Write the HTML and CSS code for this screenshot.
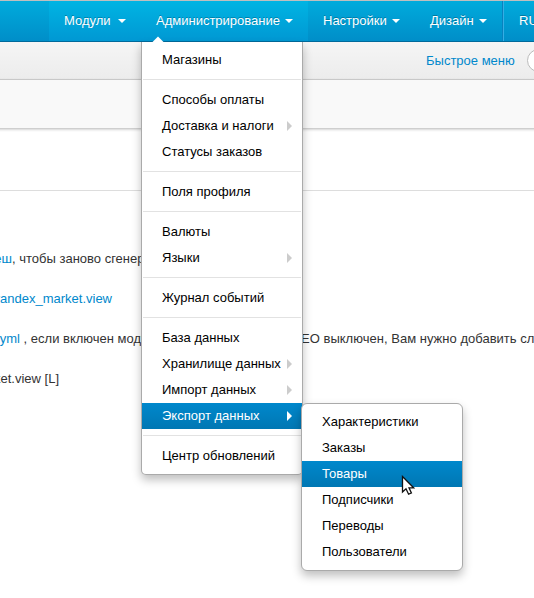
FILE: index.html
```html
<!DOCTYPE html>
<html lang="ru">
<head>
<meta charset="utf-8">
<title>Администрирование</title>
<link rel="stylesheet" href="styles.css">
</head>
<body>
<nav class="navbar">
  <a class="tab lit modules">Модули<i class="caret"></i></a>
  <div class="tab lit open">Администрирование<i class="caret"></i>
    <svg class="pointer" width="14" height="7" viewBox="0 0 14 7"><path d="M0.5 7 7 0.5 13.5 7z" fill="#fff"/></svg>
    <ul class="menu main-menu">
      <li class="item">Магазины</li>
      <li class="divider"></li>
      <li class="item">Способы оплаты</li>
      <li class="item sub">Доставка и налоги</li>
      <li class="item">Статусы заказов</li>
      <li class="divider"></li>
      <li class="item">Поля профиля</li>
      <li class="divider"></li>
      <li class="item">Валюты</li>
      <li class="item sub">Языки</li>
      <li class="divider"></li>
      <li class="item">Журнал событий</li>
      <li class="divider"></li>
      <li class="item">База данных</li>
      <li class="item sub">Хранилище данных</li>
      <li class="item sub">Импорт данных</li>
      <li class="item sub active">Экспорт данных
        <ul class="menu submenu">
          <li class="item">Характеристики</li>
          <li class="item">Заказы</li>
          <li class="item active">Товары</li>
          <li class="item">Подписчики</li>
          <li class="item">Переводы</li>
          <li class="item">Пользователи</li>
        </ul>
      </li>
      <li class="divider"></li>
      <li class="item">Центр обновлений</li>
    </ul>
  </div>
  <a class="tab settings">Настройки<i class="caret"></i></a>
  <a class="tab design">Дизайн<i class="caret"></i></a>
  <a class="tab lang">RU</a>
</nav>
<div class="quickbar"><a class="link">Быстрое меню</a><span class="search"></span></div>
<div class="titlebar"></div>
<main class="content">
  <p class="line"><span class="before"><span class="cut cut-a"><a class="link">кеш</a></span><span>, чтобы заново сгенерировать</span></span></p>
  <p class="line"><span class="cut cut-b"><a class="link">yandex_market.view</a></span></p>
  <p class="line"><span class="before"><span class="cut cut-c"><a class="link">yml</a></span><span>&nbsp;, если включен модуль</span></span><span class="after">ЕО выключен, Вам нужно добавить следующее</span></p>
  <p class="line"><span class="cut cut-d">market.view [L]</span></p>
</main>
<svg class="cursor" width="14" height="22" viewBox="0 0 14 22"><path d="M1.5 1.5V17L5 13.8 7.6 19.2 10.4 18 8 12.8H12.6z" fill="#fff" stroke="#111" stroke-width="1.3"/></svg>
</body>
</html>
```
FILE: styles.css
```css
* { box-sizing: border-box; }
html { overflow: hidden; }
body {
  margin: 0;
  width: 534px;
  height: 598px;
  overflow: hidden;
  position: relative;
  background: #fff;
  color: #333;
  font: 13px/20px "Liberation Sans", Arial, sans-serif;
}
ul { list-style: none; margin: 0; padding: 0; }
.link { color: #0088cc; }
.navbar {
  display: flex;
  height: 42px;
  padding-left: 49px;
  border-top: 1px solid #bfbfbf;
  border-bottom: 1px solid #006a9b;
  background: linear-gradient(#00abdc, #008ec8);
}
.tab {
  display: flex;
  flex: none;
  align-items: center;
  justify-content: space-between;
  height: 40px;
  padding: 0 15px;
  color: #fff;
  text-shadow: 0 -1px 0 rgba(0, 0, 0, .25);
  position: relative;
}
.lit { background: linear-gradient(#00b4e3, #0098d3); }
.modules { width: 92px; }
.open { width: 167px; }
.settings { width: 107px; }
.design { width: 88px; padding-right: 16px; }
.caret {
  width: 8px;
  border: 4px solid transparent;
  border-top-color: #fff;
  border-bottom: 0;
}
.lang { border-left: 1px solid #35aee4; box-shadow: -1px 0 0 #0882be; }
.pointer { position: absolute; left: 10px; top: 35px; z-index: 3; }
.menu {
  position: absolute;
  width: 162px;
  padding: 5px 0;
  border: 1px solid #aaa;
  background: #fff;
  color: #000;
  text-shadow: none;
  box-shadow: 0 5px 10px rgba(0, 0, 0, .25);
}
.main-menu { left: 0; top: 41px; border-top: 0; border-radius: 0 0 5px 5px; z-index: 2; }
.submenu { left: 159px; top: 0; border-radius: 6px; }
.item { height: 26px; padding: 3px 20px; position: relative; white-space: nowrap; }
.sub::after {
  content: "";
  position: absolute;
  right: 10px;
  top: 8px;
  border: 5px solid transparent;
  border-left-color: #ccc;
  border-right: 0;
}
.active { background: linear-gradient(#0088cc, #0077b3); color: #fff; }
.active::after { border-left-color: #fff; }
.divider { height: 1px; margin: 6px 1px 7px; background: #e2e2e2; }
.quickbar {
  display: flex;
  align-items: center;
  height: 38px;
  padding-left: 426px;
  overflow: hidden;
  border-bottom: 1px solid #d3d3d3;
  background: linear-gradient(#f5f5f5, #ececec);
}
.quickbar .link { flex: none; }
.search {
  flex: none;
  width: 150px;
  height: 23px;
  margin-left: 12px;
  border: 1px solid #bbb;
  border-radius: 12px;
  background: #fff;
}
.titlebar { height: 48px; margin: 0 -5px; background: #f9f9f9; box-shadow: 0 1px 3px rgba(0, 0, 0, .3); }
.content { margin-top: 62px; padding-top: 58px; border-top: 1px solid #ddd; }
.line { display: flex; margin: 0 0 20px; white-space: nowrap; overflow: hidden; }
.before { display: flex; flex: none; width: 142px; overflow: hidden; }
.after { flex: none; margin-left: 159px; letter-spacing: .02px; }
.cut { display: flex; flex: none; justify-content: flex-end; }
.cut-a { width: 12px; }
.cut-b { width: 112px; }
.cut-c { width: 20px; }
.cut-d { width: 59px; }
.cursor { position: absolute; left: 401px; top: 475px; z-index: 5; }
```
